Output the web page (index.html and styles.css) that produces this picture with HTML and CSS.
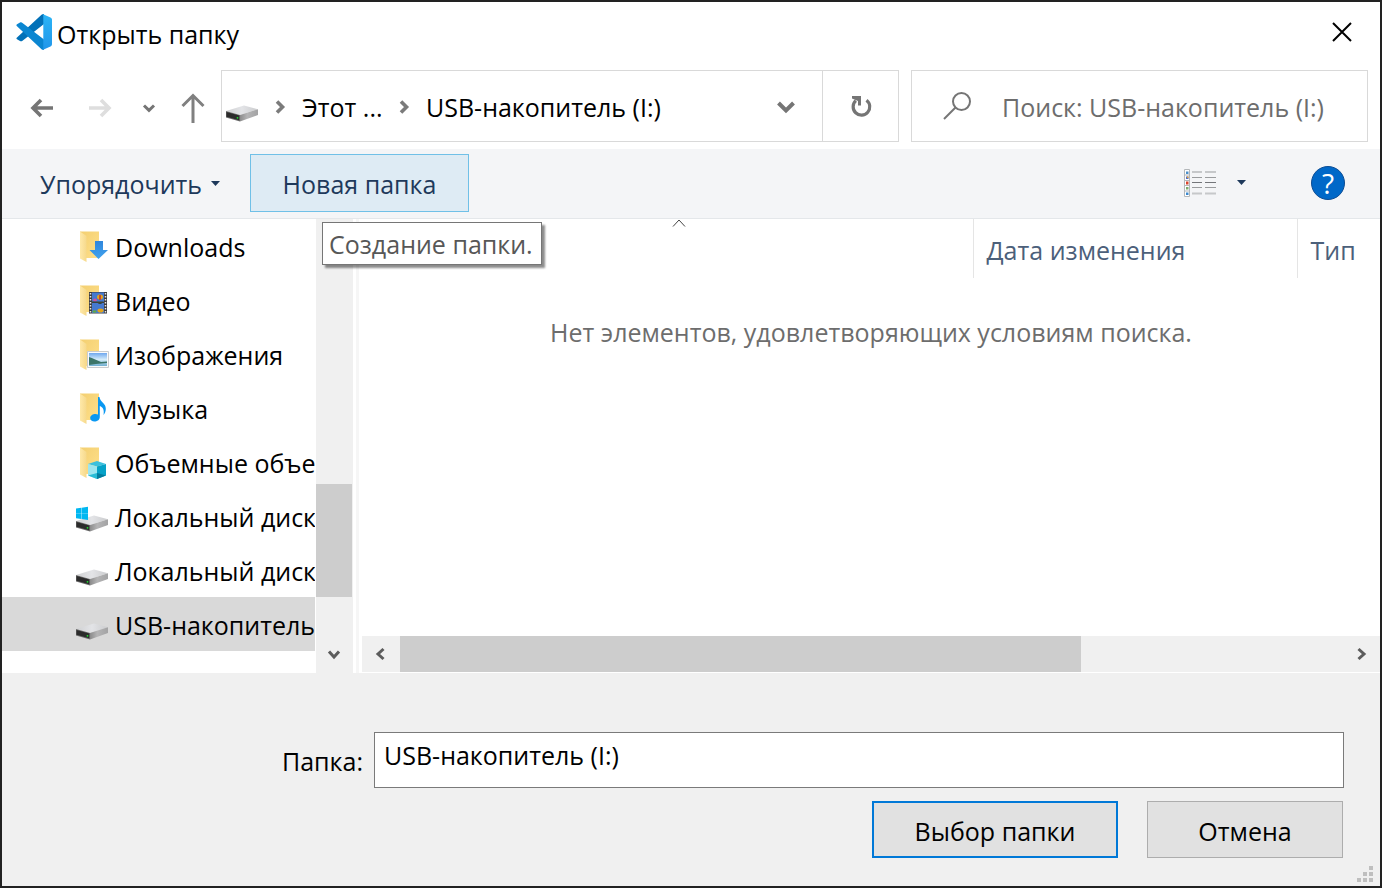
FILE: index.html
```html
<!DOCTYPE html>
<html lang="ru">
<head>
<meta charset="utf-8">
<title>Открыть папку</title>
<link rel="stylesheet" href="styles.css">
</head>
<body>
<svg class="defs" aria-hidden="true">
  <defs>
    <linearGradient id="g-top" x1="0" y1="0" x2="1" y2="0"><stop offset="0" stop-color="#cfd0d2"/><stop offset=".5" stop-color="#e3e4e7"/><stop offset="1" stop-color="#cacbcd"/></linearGradient>
    <linearGradient id="g-side" x1="0" y1="0" x2="1" y2="0"><stop offset="0" stop-color="#8b8b8b"/><stop offset=".4" stop-color="#b4b4b5"/><stop offset="1" stop-color="#a3a3a4"/></linearGradient>
    <linearGradient id="g-fold" x1="0" y1="0" x2="1" y2="1"><stop offset="0" stop-color="#f3cf71"/><stop offset="1" stop-color="#ffe08a"/></linearGradient>
    <linearGradient id="g-flap" x1="0" y1="0" x2="1" y2="0"><stop offset="0" stop-color="#ffe9a9"/><stop offset="1" stop-color="#f6d98c"/></linearGradient>
    <linearGradient id="g-sky" x1="0" y1="0" x2="0" y2="1"><stop offset="0" stop-color="#6fa8ee"/><stop offset=".5" stop-color="#d4ecfa"/><stop offset="1" stop-color="#6faed0"/></linearGradient>
    <linearGradient id="g-down" x1="0" y1="0" x2="0" y2="1"><stop offset="0" stop-color="#2f86dc"/><stop offset="1" stop-color="#41a3ee"/></linearGradient>
    <linearGradient id="g-code" x1="0" y1="0" x2="0" y2="1"><stop offset="0" stop-color="#2cb5f6"/><stop offset="1" stop-color="#2196ea"/></linearGradient>
    <symbol id="drive" viewBox="0 0 32 32">
      <path d="M0 21 18 15.500 32 19.200 14 25z" fill="url(#g-top)"/>
      <path d="M14 25 32 19.200V25L14 31.500z" fill="url(#g-side)"/>
      <path d="M0 21 14 25V31.500L0 27.500z" fill="#6a6a6a"/>
      <path d="M.5 22 13.200 25.600V30.300L.5 26.700z" fill="#2b2b2b"/>
      <circle cx="11.500" cy="27.800" r=".9" fill="#1fe02f"/>
    </symbol>
    <symbol id="folder" viewBox="0 0 32 32">
      <path d="M4 1.500H23V28H8z" fill="url(#g-fold)"/>
      <path d="M4 1.500 10.500 6V32L4 28.500z" fill="url(#g-flap)"/>
    </symbol>
  </defs>
</svg>
<main class="dialog">
  <header class="titlebar">
    <svg class="logo" viewBox="0 0 36 36" aria-hidden="true">
      <path d="M1 23.500 25.500.8C26.500 0 27.500 0 28 .2V10L6.500 26.800C5.500 27.500 4.700 27.500 4 27L1 25.200C.2 24.600.2 24 1 23.500z" fill="#0271b8"/>
      <path d="M1 12.300C.2 11.600.2 11 1 10.300L4 8.600C4.800 8.100 5.600 8.200 6.500 8.900L28 25.500V35.800C27 36 26.300 35.800 25.500 35.200z" fill="#0b86d1"/>
      <path d="M26.500 0 34.500 3.600C35.500 4.200 36 4.800 36 6V30C36 31.200 35.500 31.900 34.500 32.400L26.500 36C27.300 35.300 27.300 34.500 27.300 33.500V2.500C27.300 1.500 27.300.5 26.500 0z" fill="url(#g-code)"/>
    </svg>
    <h1 class="title">Открыть папку</h1>
    <button class="close" aria-label="Закрыть"><svg width="20" height="20" viewBox="0 0 20 20"><path d="M1 1 19 19M19 1 1 19" stroke="#000" stroke-width="2" fill="none"/></svg></button>
  </header>

  <nav class="navbar">
    <div class="arrows">
      <button aria-label="Назад"><svg width="22" height="18" viewBox="0 0 22 18"><path d="M22 9H2.500M10 1 2 9 10 17" stroke="#757575" stroke-width="3.600" fill="none"/></svg></button>
      <button aria-label="Вперед"><svg width="22" height="18" viewBox="0 0 22 18"><path d="M0 9H19.500M12 1 20 9 12 17" stroke="#dedede" stroke-width="3.600" fill="none"/></svg></button>
      <button aria-label="Последние расположения"><svg width="12" height="8" viewBox="0 0 12 8"><path d="M1 1.500 6 6.300 11 1.500" stroke="#757575" stroke-width="3" fill="none"/></svg></button>
      <button aria-label="Вверх"><svg width="24" height="30" viewBox="0 0 24 30"><path d="M12 30V2.500M1.500 13 12 2.500 22.500 13" stroke="#808080" stroke-width="3" fill="none"/></svg></button>
    </div>
    <div class="address">
      <svg class="drive-small" viewBox="0 0 32 32" aria-hidden="true"><use href="#drive" width="32" height="32"/></svg>
      <svg class="crumb-sep" width="10" height="14" viewBox="0 0 10 14"><path d="M2 1.500 7.500 7 2 12.500" stroke="#7b7b7b" stroke-width="3.600" fill="none"/></svg>
      <button class="crumb crumb-root">Этот ...</button>
      <svg class="crumb-sep" width="10" height="14" viewBox="0 0 10 14"><path d="M2 1.500 7.500 7 2 12.500" stroke="#7b7b7b" stroke-width="3.600" fill="none"/></svg>
      <button class="crumb">USB-накопитель (I:)</button>
      <button class="history" aria-label="Предыдущие расположения"><svg width="18" height="12" viewBox="0 0 18 12"><path d="M1.500 2 9 9.500 16.500 2" stroke="#757575" stroke-width="4" fill="none"/></svg></button>
      <button class="refresh" aria-label="Обновить"><svg width="22" height="22" viewBox="0 0 22 22"><path d="M16.500 4.200A8.300 8.300 0 1 1 5.800 4.700" stroke="#757575" stroke-width="3.200" fill="none"/><path d="M2 0H11V9.500H8V5L2 2.500z" fill="#757575"/></svg></button>
    </div>
    <div class="search">
      <svg width="28" height="28" viewBox="0 0 28 28" aria-hidden="true"><circle cx="18.500" cy="9.500" r="8.500" stroke="#757575" stroke-width="2" fill="none"/><path d="M12.500 15.500 1 27" stroke="#757575" stroke-width="2"/></svg>
      <input type="text" aria-label="Поиск" placeholder="Поиск: USB-накопитель (I:)">
    </div>
  </nav>

  <div class="toolbar">
    <button class="organize">Упорядочить <svg width="9" height="5" viewBox="0 0 9 5"><path d="M0 0H9L4.500 5z" fill="#1e395b"/></svg></button>
    <div class="new-folder-wrap">
      <button class="new-folder" aria-describedby="tip">Новая папка</button>
      <div class="tooltip" id="tip" role="tooltip">Создание папки.</div>
    </div>
    <button class="view" aria-label="Представление">
      <svg width="32" height="28" viewBox="0 0 32 28">
        <path d="M.5 .5H5.500V27.500H.5zM.5 6H5.500M.5 11.500H5.500M.5 16.500H5.500M.5 22H5.500" fill="#fff" stroke="#b3b7ba"/>
        <path d="M2 2.500h2.500v2.500H2z" fill="#4a8fc9"/><path d="M2 7.500h2.500v2.500H2z" fill="#5a6fc0"/><path d="M3 7.500h1.500v1.500H3z" fill="#e0a030"/><path d="M2 12.500h2.500v3H2z" fill="#d9432b"/><path d="M2 18h2.500v2.500H2z" fill="#7cab6c"/><path d="M2 23.500h2.500v2.500H2z" fill="#3b88cf"/>
        <path d="M8 3H18M21 3H32M8 24.500H18M21 24.500H32" stroke="#c6c8ca" stroke-width="2"/>
        <path d="M8 8.500H18M21 8.500H32M8 18.500H18M21 18.500H32" stroke="#9a9c9e"/>
        <path d="M8 13.500H18M21 13.500H32" stroke="#74767a"/>
      </svg>
      <svg width="9" height="5" viewBox="0 0 9 5"><path d="M0 0H9L4.500 5z" fill="#1e395b"/></svg>
    </button>
    <button class="help" aria-label="Справка">?</button>
  </div>

  <div class="body">
    <ul class="tree">
      <li><svg viewBox="0 0 32 32"><use href="#folder"/><path d="M19 11H27V20H32L22.500 29 13.500 20H19z" fill="url(#g-down)"/></svg>Downloads</li>
      <li><svg viewBox="0 0 32 32"><use href="#folder"/><path d="M13 8H31V29.500H13z" fill="#3c3c3f"/><path d="M16 8.500H28V18H16zM16 19H28V29H16z" fill="#4579cf"/><path d="M14.500 9V29M29.500 9V29" stroke="#e8e8e8" stroke-width="1.500" stroke-dasharray="1.500 1.500"/><ellipse cx="24" cy="13" rx="3" ry="2.500" fill="#e3a51c"/><path d="M23 11h2v5h-2z" fill="#c84a2b"/><ellipse cx="19" cy="16" rx="2" ry="1.500" fill="#c653a4"/><path d="M16 17.500H28L25 20H23L21 18.500H16z" fill="#3b4537"/><ellipse cx="24.500" cy="26.500" rx="3" ry="2" fill="#e3a51c"/><ellipse cx="18.500" cy="27.500" rx="2" ry="1.200" fill="#62a84b"/></svg>Видео</li>
      <li><svg viewBox="0 0 32 32"><use href="#folder"/><path d="M11.500 13.500H32.500V29.500H11.500z" fill="#fafafa" stroke="#c9ccce"/><path d="M13 15H31V28H13z" fill="url(#g-sky)"/><path d="M13 19C17 20 20 22 25 24L31 23.500V25L20 26 13 27z" fill="#3c7568"/></svg>Изображения</li>
      <li><svg viewBox="0 0 32 32"><use href="#folder"/><path d="M22 5H23.500C24 10 30 11 29.800 17C29.700 20 28.500 22 27.500 23C28.500 18 27 15 23.800 14V25C23.800 28 21 29.500 18.500 29.500C16 29.500 14.200 28.200 14.200 26C14.200 23.500 17 22 19.500 22C20.500 22 21.300 22.200 22 22.500z" fill="#0a98f2"/></svg>Музыка</li>
      <li><svg viewBox="0 0 32 32"><use href="#folder"/><path d="M12 18 21 15 30 18 21 20.500z" fill="#3cc0dd"/><path d="M12 18 21 20.500V33L12 29.500z" fill="#9de5ef"/><path d="M30 18 21 20.500V33L30 29.500z" fill="#06a2c8"/><path d="M12 29.500 21 27V33z" fill="#29bcd6"/><path d="M30 29.500 21 27V33z" fill="#037c9d"/></svg>Объемные объекты</li>
      <li><svg viewBox="0 0 32 32"><use href="#drive" width="32" height="32"/><path d="M0 8.500 5.300 7.800V13.200H0zM5.700 7.700 12 6.800V13.200H5.700zM0 13.600H5.300V19L0 18.300zM5.700 13.600H12V20L5.700 19.100z" fill="#00b7f1"/></svg>Локальный диск (C:)</li>
      <li><svg viewBox="0 0 32 32"><use href="#drive" width="32" height="32"/></svg>Локальный диск (D:)</li>
      <li class="selected"><svg viewBox="0 0 32 32"><use href="#drive" width="32" height="32"/></svg>USB-накопитель (I:)</li>
    </ul>
    <div class="vscroll">
      <div class="vtrack"><div class="vthumb"></div></div>
      <button aria-label="Прокрутить вниз"><svg width="12" height="10" viewBox="0 0 12 10"><path d="M1 1.500 6 7 11 1.500" stroke="#5c5c5c" stroke-width="3" fill="none"/></svg></button>
    </div>
    <div class="splitter"></div>
    <section class="content">
      <table class="files">
        <colgroup><col><col class="col-date"><col class="col-type"></colgroup>
        <thead><tr>
          <th class="sorted" aria-label="Имя" aria-sort="ascending"><svg width="14" height="8" viewBox="0 0 14 8"><path d="M1 7.500 7 1 13 7.500" stroke="#444" fill="none"/></svg></th>
          <th>Дата изменения</th>
          <th>Тип</th>
        </tr></thead>
        <tbody><tr><td colspan="3">Нет элементов, удовлетворяющих условиям поиска.</td></tr></tbody>
      </table>
      <div class="hscroll">
        <button aria-label="Прокрутить влево"><svg width="10" height="12" viewBox="0 0 10 12"><path d="M8.500 1 3 6 8.500 11" stroke="#5c5c5c" stroke-width="3" fill="none"/></svg></button>
        <div class="htrack"><div class="hthumb"></div></div>
        <button aria-label="Прокрутить вправо"><svg width="10" height="12" viewBox="0 0 10 12"><path d="M1.500 1 7 6 1.500 11" stroke="#5c5c5c" stroke-width="3" fill="none"/></svg></button>
      </div>
    </section>
  </div>

  <footer class="footer">
    <div class="field">
      <label for="folder-name">Папка:</label>
      <input id="folder-name" type="text" value="USB-накопитель (I:)">
    </div>
    <div class="actions">
      <button class="primary">Выбор папки</button>
      <button class="cancel">Отмена</button>
    </div>
    <svg class="grip" width="16" height="16" viewBox="0 0 16 16" aria-hidden="true"><path d="M12 0h4v4h-4zM6 6h4v4H6zM12 6h4v4h-4zM0 12h4v4H0zM6 12h4v4H6zM12 12h4v4h-4z" fill="#bfbfbf"/></svg>
  </footer>
</main>
</body>
</html>
```

FILE: styles.css
```css
* { box-sizing: border-box; }
body {
  margin: 0;
  font: 25px/36px "Open Sans", "Noto Sans", sans-serif;
  color: #000;
}
button, input {
  font: inherit;
  color: inherit;
  margin: 0;
  padding: 0;
  border: 0;
  background: none;
  border-radius: 0;
}
svg { display: block; flex: none; overflow: visible; }
.defs { position: absolute; width: 0; height: 0; }

.dialog {
  display: flex;
  flex-direction: column;
  min-height: 100vh;
  border: 2px solid #222;
  background: #fff;
}

.titlebar {
  display: flex;
  align-items: center;
  height: 64px;
  padding: 0 16px 4px 14px;
}
.logo { width: 36px; height: 36px; }
.title { flex: 1; margin: 0; padding: 4px 0 0 5px; font-size: inherit; font-weight: 400; }
.close { display: grid; place-items: center; width: 44px; height: 44px; }

.navbar {
  display: grid;
  grid-template-columns: 208px minmax(0, 690fr) minmax(0, 457fr);
  padding: 4px 12px 7px 11px;
}
.arrows { display: grid; grid-template-columns: 58px 58px 40px 48px; }
.arrows button { display: grid; place-items: center; padding-top: 4px; }
.address {
  display: flex;
  align-items: center;
  height: 72px;
  margin-right: 12px;
  padding-left: 4px;
  border: 1px solid #d9d9d9;
}
.drive-small { width: 32px; height: 32px; }
.crumb-sep { margin: 2px 17px 0; }
.crumb { white-space: nowrap; padding-top: 2px; }
.crumb-root { width: 80px; text-align: left; }
.history { margin-left: auto; width: 72px; height: 70px; padding-top: 2px; display: grid; place-items: center; }
.refresh { width: 76px; height: 70px; padding-top: 2px; border-left: 1px solid #d9d9d9; display: grid; place-items: center; }
.search {
  display: flex;
  align-items: center;
  padding-left: 31px;
  border: 1px solid #d9d9d9;
}
.search input { flex: 1; min-width: 0; margin-left: 31px; padding-top: 2px; outline: 0; }
.search input::placeholder { color: #6d6d6d; opacity: 1; }

.toolbar {
  display: flex;
  align-items: center;
  height: 70px;
  padding: 0 35px 2px 38px;
  background: #f4f5f7;
  border-bottom: 1px solid #e4e7ea;
  color: #1e395b;
}
.organize { display: flex; align-items: center; gap: 9px; width: 210px; padding-top: 2px; }
.new-folder-wrap { position: relative; }
.new-folder {
  display: block;
  width: 219px;
  height: 58px;
  padding-top: 2px;
  border: 1px solid #70c0e7;
  background: #deebf4;
}
.tooltip {
  position: absolute;
  z-index: 1;
  left: 72px;
  top: 68px;
  padding: 3px 8px 2px 6px;
  white-space: nowrap;
  color: #575757;
  background: #fff;
  border: 1px solid #767676;
  box-shadow: 3px 3px 2px rgba(0, 0, 0, .45);
}
.view { display: flex; align-items: center; gap: 21px; margin: 0 65px 0 auto; }
.help {
  width: 34px;
  height: 34px;
  border: 1px solid #0d4d94;
  border-radius: 50%;
  background: #0068c8;
  color: #fff;
  font-size: 28px;
  line-height: 32px;
}

.body { flex: 1; display: flex; min-height: 454px; }
.tree { width: 313px; margin: 0 1px 0 0; padding: 0; list-style: none; overflow: hidden; }
.tree li { display: flex; align-items: center; gap: 7px; height: 54px; padding: 2px 0 0 74px; white-space: nowrap; }
.tree svg { width: 32px; height: 32px; margin-bottom: 2px; }
.tree .selected { background: #d9d9d9; }
.vscroll { display: flex; flex-direction: column; width: 37px; background: #f0f0f0; }
.vtrack { flex: 1; display: flex; flex-direction: column; margin-right: 1px; }
.vtrack::before { content: ""; flex: 265; }
.vtrack::after { content: ""; flex: 40; }
.vthumb { flex: 113; background: #cdcdcd; }
.vscroll button, .hscroll button { display: grid; place-items: center; width: 36px; height: 36px; }
.splitter { width: 3px; margin: 0 3px; background: #f6f6f6; }
.content { flex: 1; display: flex; flex-direction: column; }
.files { width: 100%; border-collapse: collapse; table-layout: fixed; }
.col-date { width: 324px; }
.col-type { width: 83px; }
.files th {
  height: 59px;
  padding: 3px 0 0 13px;
  border-left: 1px solid #e5e5e5;
  text-align: left;
  font-weight: 400;
  color: #4c607a;
}
.files .sorted { border: 0; padding: 0 0 0 24px; vertical-align: top; }
.sorted svg { margin: 0 auto; }
.files td { padding: 36px 0 0; text-align: center; color: #6d6d6d; }
.hscroll { display: flex; margin: auto 0 1px; background: #f0f0f0; }
.htrack { flex: 1; display: flex; }
.htrack::before { content: ""; flex: 2; }
.htrack::after { content: ""; flex: 263; }
.hthumb { flex: 681; background: #cdcdcd; }

.footer { position: relative; padding: 59px 36px 28px; background: #f0f0f0; }
.field { display: flex; align-items: center; }
.field label { width: 336px; padding: 2px 11px 0 0; text-align: right; }
.field input {
  flex: 1;
  min-width: 0;
  height: 56px;
  padding: 0 9px 10px;
  border: 1px solid #7a7a7a;
  background: #fff;
}
.actions { display: flex; justify-content: flex-end; gap: 29px; margin: 13px 1px 0 0; }
.actions button { height: 57px; padding-top: 2px; background: #e1e1e1; }
.primary { width: 246px; border: 2px solid #0078d7; }
.cancel { width: 196px; border: 1px solid #adadad; }
.grip { position: absolute; right: 7px; bottom: 4px; }
```
